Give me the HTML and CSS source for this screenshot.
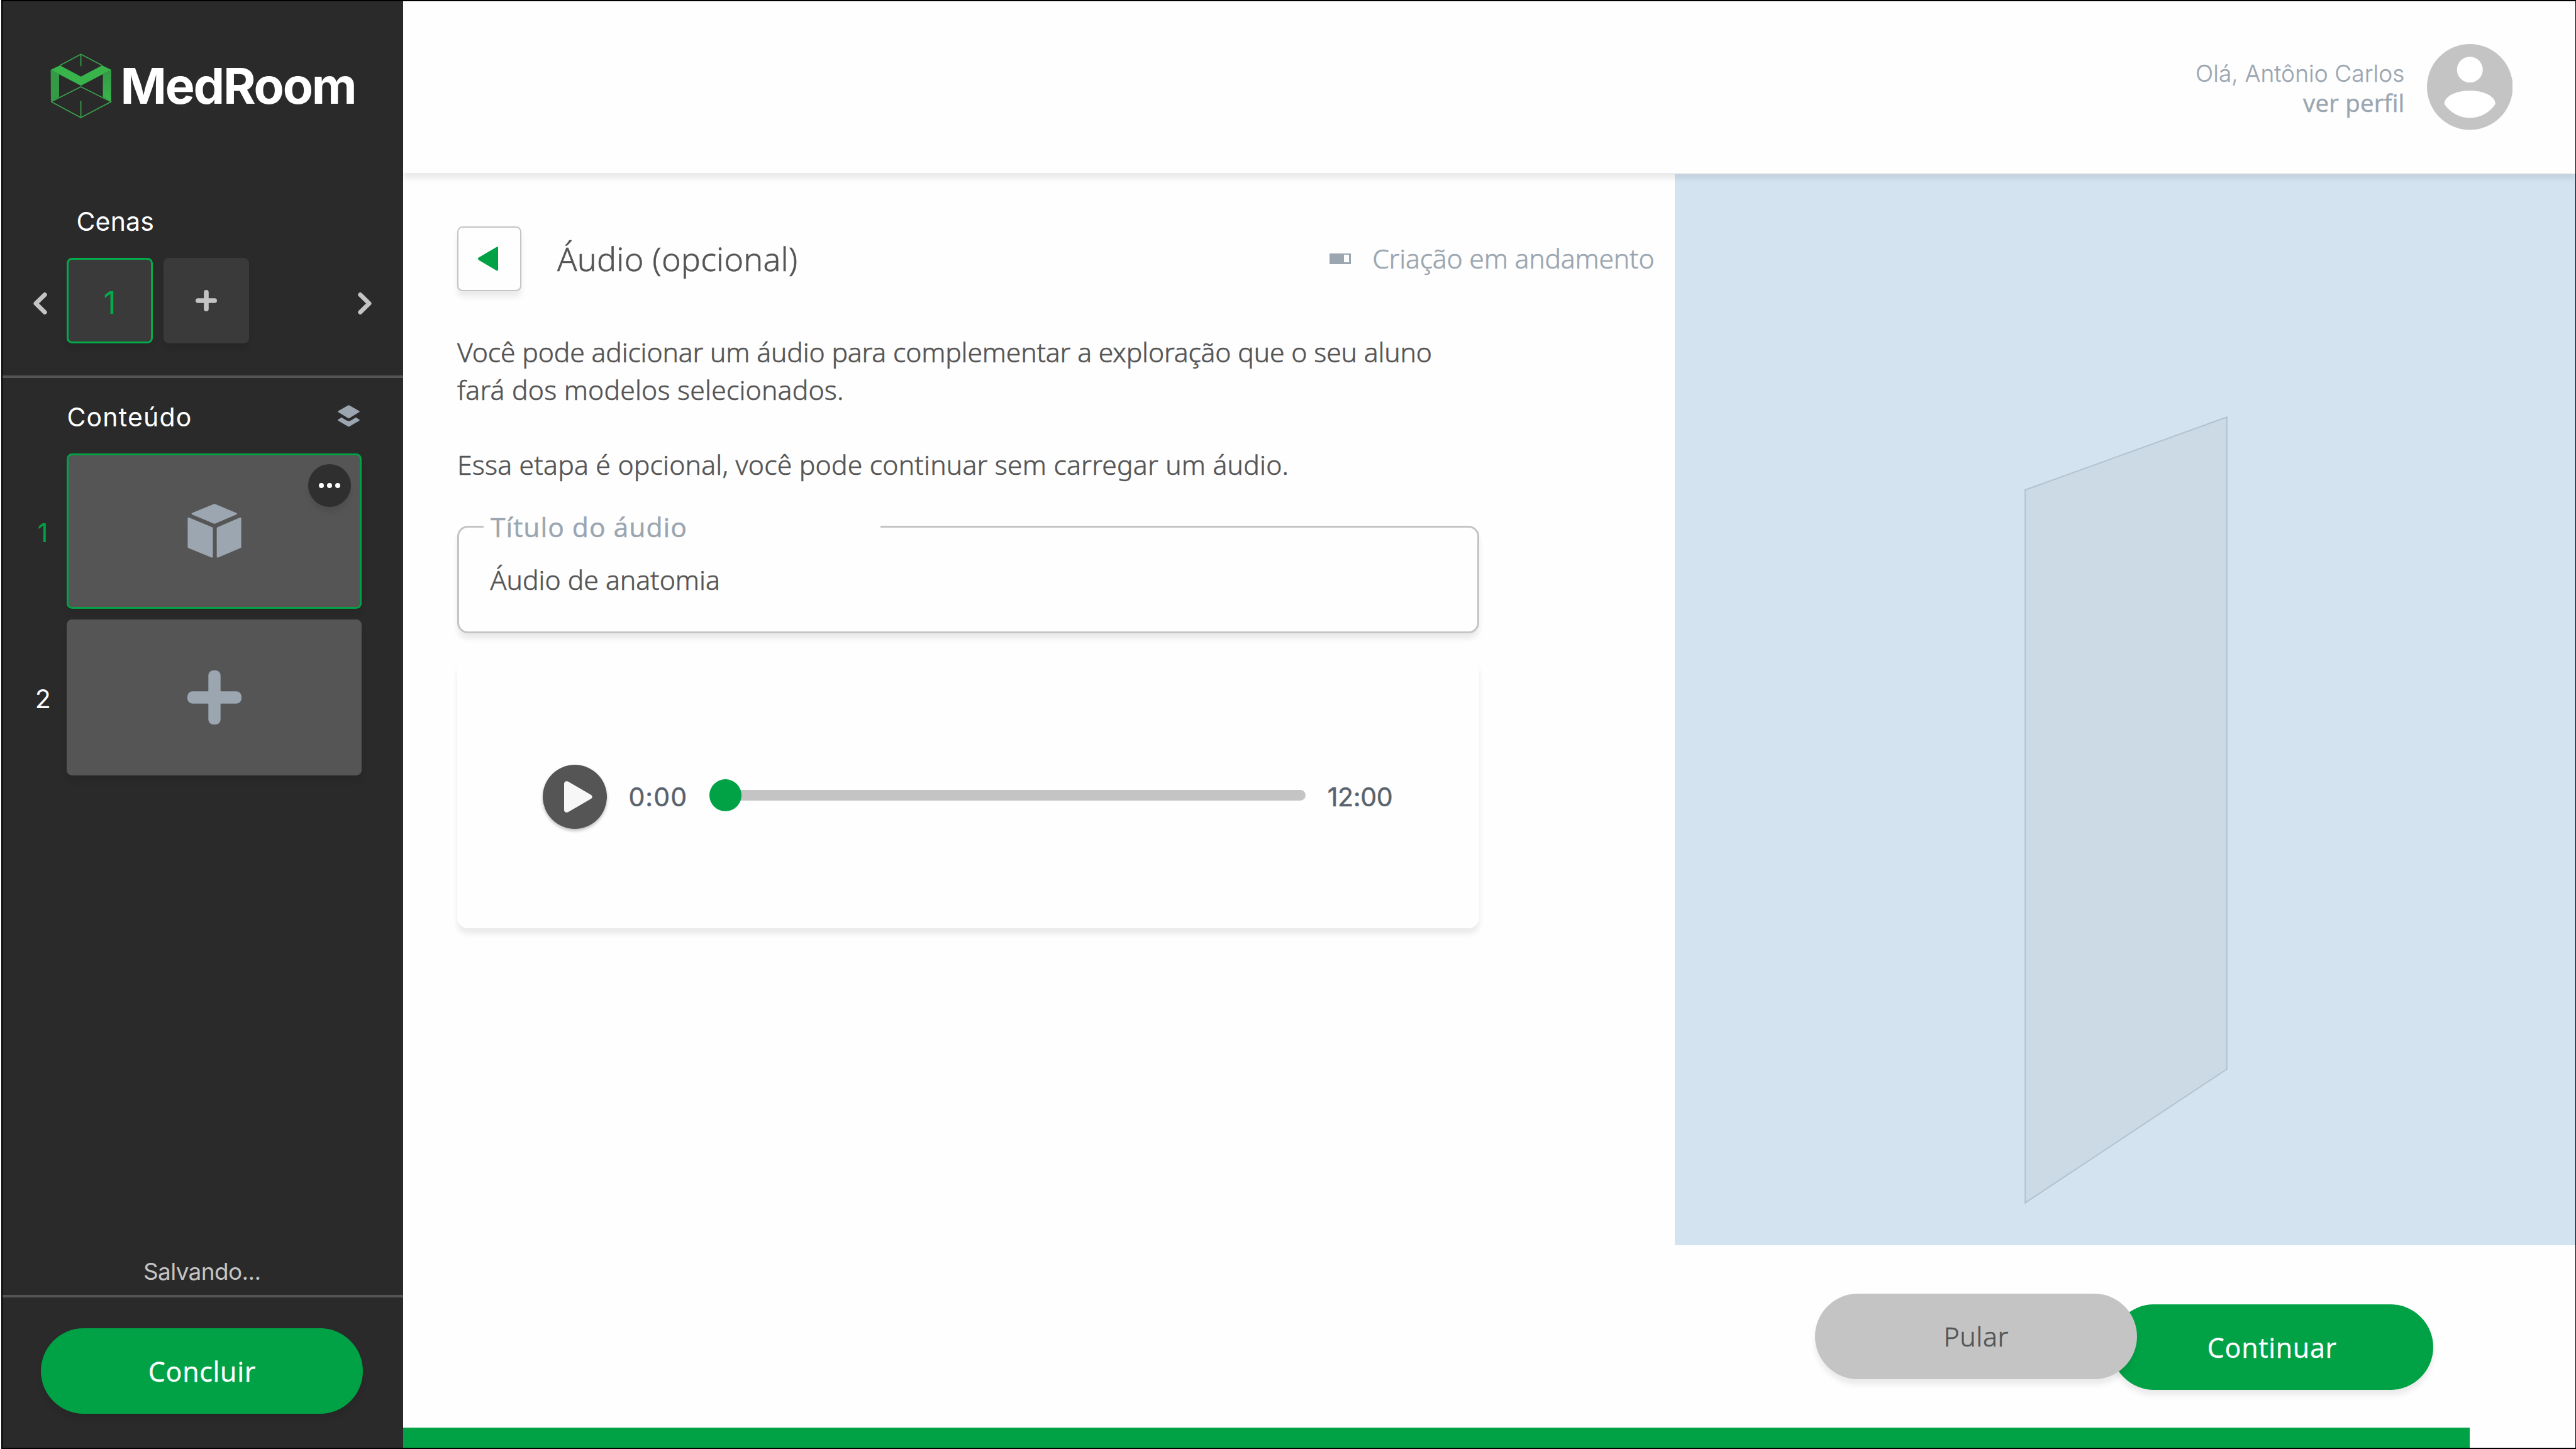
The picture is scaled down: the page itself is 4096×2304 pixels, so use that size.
FILE: index.html
```html
<!DOCTYPE html>
<html lang="pt-BR">
<head>
<meta charset="utf-8">
<title>MedRoom</title>
<link rel="stylesheet" href="styles.css">
</head>
<body>
<div class="app">
  <aside class="sidebar">
    <div class="brand">
      <svg class="brand-mark" viewBox="80 85 98 104">
        <defs>
          <linearGradient id="leg" x1="0" y1="0" x2="0" y2="1"><stop offset="0.1" stop-color="#349a46"/><stop offset="0.9" stop-color="#38b44b"/></linearGradient>
        </defs>
        <path d="M80.6 111L94 118V154.3L81 162z" fill="#349a46"/>
        <path d="M177 111L163.6 118V154.3L176.6 162z" fill="url(#leg)"/>
        <path d="M95.3 104L128.6 121.7L162.4 104L177 111L128.6 136.2L80.6 111z" fill="#38b44b"/>
        <path d="M95.3 104L128.6 86.3L162.4 104M128.6 86V105.3M81.4 161.8L128.6 138L176.4 161.8L128.6 187L81.4 161.8M128.6 160.5V187" fill="none" stroke="#38a04a" stroke-width="1.7"/>
      </svg>
      <span class="brand-name">MedRoom</span>
    </div>

    <section class="scenes">
      <h2 class="scenes-title">Cenas</h2>
      <div class="scenes-row">
        <svg class="arrow" viewBox="0 0 22 35"><path d="M18.2 3.6L4 17.5L18.2 31.4"/></svg>
        <div class="scene scene-active">1</div>
        <div class="scene">
          <svg class="scene-plus" viewBox="0 0 34 34"><path d="M17 3.8V30.2M3.8 17H30.2"/></svg>
        </div>
        <svg class="arrow arrow-next" viewBox="0 0 22 35"><path d="M3.8 3.6L18 17.5L3.8 31.4"/></svg>
      </div>
    </section>

    <section class="contents">
      <div class="contents-head">
        <h2 class="contents-title">Conteúdo</h2>
        <svg class="layers" viewBox="0 0 35 35">
          <path d="M16.6 .4Q17.5 0 18.4 .4L34.2 9.4Q35.4 10.3 34.2 11.2L18.4 20.9Q17.5 21.4 16.6 20.9L.8 11.2Q-.4 10.3 .8 9.4z"/>
          <path d="M5.2 20.2Q6.2 19.8 7 20.3L14 24.5Q17.5 26.2 21 24.5L28 20.3Q28.8 19.8 29.8 20.2L34.2 23Q35.4 23.9 34.2 24.9L18.4 34.2Q17.5 34.7 16.6 34.2L.8 24.9Q-.4 23.9 .8 23z"/>
        </svg>
      </div>
      <div class="item">
        <span class="item-number item-number-active">1</span>
        <div class="card card-active">
          <svg class="card-icon" viewBox="0 0 86 86">
            <path d="M41.8 .4Q43 -.1 44.2 .4L78.2 14.8Q79.6 15.8 78.2 17L44.2 31.6Q43 32.1 41.8 31.6L7.2 17Q6 15.8 7.2 14.8z"/>
            <path d="M.4 23.4Q.6 21.4 2.6 21.9L39.2 37.2Q40.5 37.8 40.5 39V84Q40.2 86.2 38.2 85.5L1.2 70.2Q.4 69.8 .4 68.6z"/>
            <path d="M85.6 23.4Q85.4 21.4 83.4 21.9L47.9 37.2Q46.6 37.8 46.6 39V84Q46.9 86.2 48.9 85.5L84.8 70.2Q85.6 69.8 85.6 68.6z"/>
          </svg>
          <div class="more"><i></i><i></i><i></i></div>
        </div>
      </div>
      <div class="item">
        <span class="item-number">2</span>
        <div class="card">
          <svg class="card-icon" viewBox="0 0 86 86">
            <rect x="33.3" y="0" width="19.4" height="86" rx="8"/>
            <rect x="0" y="33.3" width="86" height="19.4" rx="8"/>
          </svg>
        </div>
      </div>
    </section>

    <p class="saving">Salvando...</p>
    <div class="finish">
      <button class="button button-primary">Concluir</button>
    </div>
  </aside>

  <main class="main">
    <header class="header">
      <div class="profile">
        <span class="greeting">Olá, Antônio Carlos</span>
        <span class="profile-link">ver perfil</span>
      </div>
      <svg class="avatar" viewBox="0 0 136.5 136.5">
        <circle cx="68.25" cy="68.25" r="68.25" fill="#c4c4c4"/>
        <circle cx="68.25" cy="40.8" r="20.5" fill="#fff"/>
        <path d="M27.7 95.5C27.7 81.5 48.5 74.2 68.25 74.2S108.8 81.5 108.8 95.5C100 109 85 117.4 68.25 117.4S36.5 109 27.7 95.5z" fill="#fff"/>
      </svg>
    </header>

    <div class="workspace">
      <section class="editor">
        <div class="titlebar">
          <button class="back">
            <svg class="back-icon" viewBox="0 0 32 39"><path d="M32 1.5V37.5Q31.4 39 30 38.4L1 21.5Q-.8 19.5 1 17.5L30 .6Q31.4 0 32 1.5z"/></svg>
          </button>
          <h1 class="title">Áudio (opcional)</h1>
          <div class="status"><i class="status-icon"></i><span>Criação em andamento</span></div>
        </div>
        <p class="text"><span class="tight">Você pode adicionar um áudio para complementar a exploração que o seu aluno</span><br>fará dos modelos selecionados.<br><br>Essa etapa é opcional, você pode continuar sem carregar um áudio.</p>
        <div class="field">
          <label class="field-label">Título do áudio</label>
          <span class="field-value">Áudio de anatomia</span>
        </div>
        <div class="player">
          <div class="play">
            <svg class="play-icon" viewBox="0 0 45 50"><path d="M0 4Q.6 -1.2 6 .6L43 22Q46.4 25 43 28L6 49.4Q.6 51.2 0 46z"/></svg>
          </div>
          <span class="time">0:00</span>
          <div class="track"><div class="knob"></div></div>
          <span class="time-total">12:00</span>
        </div>
      </section>

      <section class="side">
        <div class="preview">
          <svg class="model" viewBox="3219 661 323 1254"><path d="M3220.2 779L3540.8 663.2V1700L3220.2 1912.6z"/></svg>
        </div>
        <div class="actions">
          <button class="button button-skip">Pular</button>
          <button class="button button-primary button-next">Continuar</button>
        </div>
      </section>
    </div>
    <div class="progress"></div>
  </main>
</div>
</body>
</html>
```
FILE: styles.css
```css
* { box-sizing: border-box; }

body {
  margin: 0;
  background: #fff;
  font-family: "Noto Sans", "Open Sans", sans-serif;
  color: #555;
}

h1, h2, p { margin: 0; font-weight: inherit; }
button { border: 0; padding: 0; font: inherit; }
svg { display: block; flex: none; }

.app {
  display: flex;
  width: 4094px;
  height: 2304px;
  margin-left: 2px;
  border: 2px solid #000;
  border-right-width: 1px;
  background: #fefefe;
}

/* Sidebar */
.sidebar {
  display: flex;
  flex-direction: column;
  flex: none;
  width: 637.4px;
  background: #2a2a2a;
  color: #fff;
  font-family: Inter, "Liberation Sans", sans-serif;
}

.brand {
  display: flex;
  align-items: center;
  gap: 13.5px;
  height: 104px;
  margin: 83px 0 0 76px;
}
.brand-mark { width: 98px; height: 104px; }
.brand-name {
  font-size: 78.8px;
  font-weight: 700;
  line-height: 104px;
  letter-spacing: -2.2px;
}

.scenes {
  margin-top: 138px;
  padding-bottom: 51px;
  border-bottom: 4px solid #545454;
}
.scenes-title {
  margin-left: 117.4px;
  font-size: 41px;
  line-height: 50px;
  letter-spacing: .2px;
}
.scenes-row {
  display: flex;
  align-items: center;
  margin: 32.6px 50px 0 48.7px;
}
.arrow {
  width: 22px;
  height: 35px;
  margin-top: 8.6px;
  fill: none;
  stroke: #c4c4c4;
  stroke-width: 7;
  stroke-linecap: round;
  stroke-linejoin: round;
}
.arrow-next { margin-left: auto; }
.scene {
  display: flex;
  align-items: center;
  justify-content: center;
  width: 136.5px;
  height: 136.5px;
  margin-left: 17px;
  border-radius: 8.5px;
  background: #3a3a3a;
  box-shadow: 0 8.5px 8.5px rgba(0, 0, 0, .08);
}
.scene-active {
  margin-left: 31.6px;
  padding-top: 7px;
  border: 3px solid #00ad4a;
  color: #00ad4a;
  font-size: 49px;
}
.scene-plus {
  width: 34px;
  height: 34px;
  stroke: #c4c4c4;
  stroke-width: 7.6;
  stroke-linecap: round;
}

.contents {
  display: flex;
  flex-direction: column;
  gap: 17px;
  padding-top: 37px;
}
.contents-head {
  display: flex;
  justify-content: space-between;
  height: 50px;
  margin: 0 69.7px 15.5px 102.4px;
}
.contents-title {
  font-size: 41px;
  line-height: 50px;
  letter-spacing: 1.2px;
}
.layers { width: 35px; height: 35px; margin-top: 5.5px; fill: #9ba6b0; }
.item {
  display: grid;
  grid-template-columns: 102.3px 469px;
  align-items: center;
}
.item-number {
  padding: 4.6px 0 0 26px;
  text-align: center;
  font-size: 41px;
  line-height: 50px;
}
.item-number-active { color: #00a245; }
.card {
  position: relative;
  display: flex;
  align-items: center;
  justify-content: center;
  height: 247.5px;
  border-radius: 8.5px;
  background: #555;
  box-shadow: 0 8.5px 8.5px rgba(0, 0, 0, .08);
}
.card-active { border: 3px solid #00a245; }
.card-icon { width: 86px; height: 86px; fill: #9ba6b0; }
.more {
  position: absolute;
  top: 14px;
  right: 14px;
  display: flex;
  align-items: center;
  justify-content: center;
  gap: 5px;
  width: 68px;
  height: 68px;
  border-radius: 50%;
  background: #2f2f2f;
  box-shadow: 0 8.5px 8.5px rgba(0, 0, 0, .08);
}
.more i { width: 8px; height: 8px; border-radius: 50%; background: #fff; }

.saving {
  margin-top: auto;
  padding: 0 3px 12px 0;
  border-bottom: 4px solid #545454;
  text-align: center;
  font-size: 37px;
  line-height: 50px;
  letter-spacing: -.66px;
  color: #c4c4c4;
}
.finish { padding: 49px 0 54px 61.4px; }

.button {
  display: block;
  width: 512px;
  height: 136.5px;
  border-radius: 68.3px;
  box-shadow: 0 8.5px 8.5px rgba(0, 0, 0, .08);
  text-align: center;
}
.button-primary {
  padding-top: 2px;
  background: #00a245;
  color: #fff;
  font: 500 43px "Open Sans", "Noto Sans", sans-serif;
  letter-spacing: .7px;
  -webkit-text-stroke: .4px;
}

/* Header */
.main {
  display: flex;
  flex-direction: column;
  flex: 1;
}
.header {
  position: relative;
  z-index: 1;
  display: flex;
  align-items: center;
  justify-content: flex-end;
  gap: 35px;
  height: 273px;
  padding-right: 100px;
  background: #fefefe;
  box-shadow: 0 8.5px 8.5px rgba(0, 0, 0, .08);
  color: #9ba6b0;
}
.profile {
  display: flex;
  flex-direction: column;
  align-items: flex-end;
  margin-top: 3px;
  line-height: 46px;
}
.greeting { font-family: Inter, "Liberation Sans", sans-serif; font-size: 37px; font-weight: 300; letter-spacing: .1px; -webkit-text-stroke: .3px; }
.profile-link { font-family: "Open Sans", "Noto Sans", sans-serif; font-size: 38.4px; font-weight: 500; letter-spacing: .2px; -webkit-text-stroke: .5px; }
.avatar { width: 136.5px; height: 136.5px; }

/* Editor */
.workspace { display: flex; flex: 1; }
.editor {
  flex: none;
  width: 2022px;
  padding: 85.4px 33px 0 85.6px;
}
.titlebar { display: flex; align-items: center; height: 102.4px; }
.back {
  display: flex;
  align-items: center;
  justify-content: center;
  width: 102px;
  height: 102.4px;
  padding-right: 3px;
  border: 2px solid #c4c4c4;
  border-radius: 8.5px;
  background: #fefefe;
  box-shadow: 0 8.5px 8.5px rgba(0, 0, 0, .08);
}
.back-icon { width: 32px; height: 39px; fill: #00a245; }
.title {
  margin: 0 0 2px 57px;
  font-size: 52px;
  font-weight: 300;
  letter-spacing: .2px;
  -webkit-text-stroke: .6px;
}
.status {
  display: flex;
  align-items: center;
  gap: 34px;
  margin: 0 0 3px auto;
  color: #9ba6b0;
  font-size: 42.7px;
  font-weight: 300;
  letter-spacing: -.2px;
  -webkit-text-stroke: .6px;
}
.status-icon {
  width: 34px;
  height: 17px;
  margin-top: 3px;
  border: solid #9ba6b0;
  border-width: 2px 3px 3px 23px;
}
.text {
  margin-top: 67.3px;
  font-size: 42.7px;
  font-weight: 300;
  line-height: 59.73px;
  letter-spacing: .2px;
  white-space: nowrap;
  -webkit-text-stroke: .6px;
}
.tight { letter-spacing: -.16px; }

.field {
  position: relative;
  display: flex;
  align-items: center;
  width: 1625px;
  height: 170.6px;
  margin-top: 67px;
  padding-left: 49.5px;
  border: 3px solid #c4c4c4;
  border-radius: 17px;
  background: #fefefe;
  box-shadow: 0 8.5px 8.5px rgba(0, 0, 0, .08);
}
.field-label {
  position: absolute;
  top: -31.5px;
  left: 39.5px;
  width: 631px;
  padding-left: 10.5px;
  background: #fefefe;
  color: #9ba6b0;
  font: 500 42.7px/60px "Open Sans", "Noto Sans", sans-serif;
  letter-spacing: .95px;
  -webkit-text-stroke: .5px;
}
.field-value {
  padding-top: 1px;
  font-size: 42.7px;
  font-weight: 300;
  -webkit-text-stroke: .6px;
}

.player {
  display: flex;
  align-items: center;
  width: 1625px;
  height: 426.7px;
  margin-top: 42.5px;
  padding: 9px 0 0 136px;
  border-radius: 17px;
  background: #fefefe;
  box-shadow: 0 8.5px 8.5px rgba(0, 0, 0, .08);
  color: #59636d;
  font-family: Inter, "Liberation Sans", sans-serif;
  font-size: 41px;
  -webkit-text-stroke: .5px;
}
.play {
  display: flex;
  align-items: center;
  justify-content: center;
  width: 102.4px;
  height: 102.4px;
  padding-left: 11px;
  border-radius: 50%;
  background: #555;
  box-shadow: 0 3px 5px rgba(0, 0, 0, .25);
}
.play-icon { width: 45px; height: 50px; fill: #f7f7f7; }
.time { width: 129px; margin-left: 34px; letter-spacing: 1.1px; }
.track {
  display: flex;
  align-items: center;
  width: 947.3px;
  height: 17px;
  margin: -5px 35px 0 0;
  border-radius: 8.5px;
  background: #c4c4c4;
}
.knob { width: 51px; height: 51px; border-radius: 50%; background: #00a245; }
.time-total { letter-spacing: -.3px; }

/* Model preview and actions */
.side { display: flex; flex-direction: column; flex: 1; padding-top: 2px; }
.preview {
  height: 1702.5px;
  padding: 384px 0 0 555.6px;
  background: #d3e3ef;
}
.model { width: 323px; height: 1254px; fill: #ccdae6; stroke: #b2c3cf; stroke-width: 2; }
.actions { display: flex; padding: 77px 0 0 222.8px; }
.button-skip {
  position: relative;
  background: #c4c4c4;
  color: #555;
  font-size: 42.7px;
  font-weight: 300;
  letter-spacing: .65px;
  -webkit-text-stroke: .6px;
}
.button-next { margin: 17px 0 0 -41.4px; }

.progress { width: 3286px; height: 32px; background: #00a245; }
```
